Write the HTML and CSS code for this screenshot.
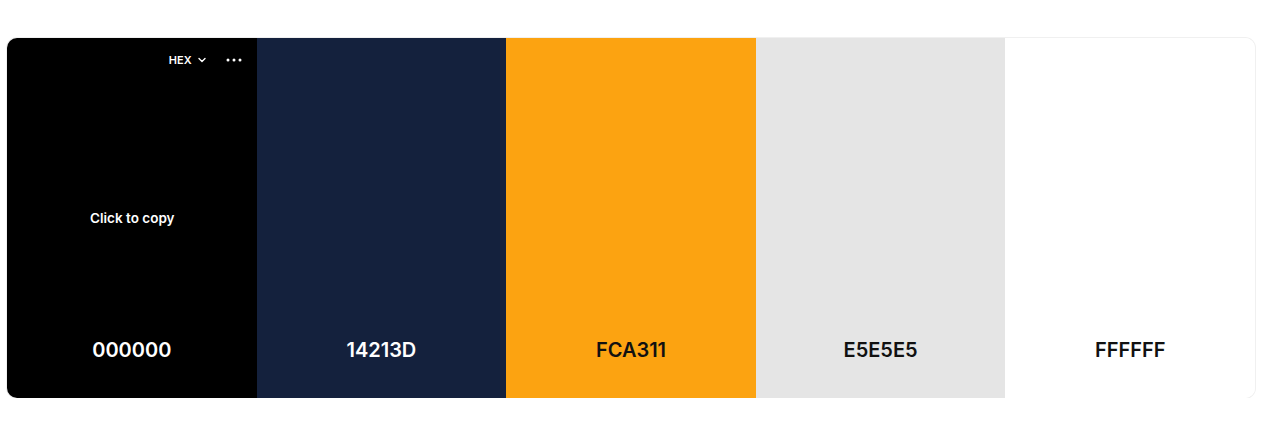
FILE: index.html
```html
<!DOCTYPE html>
<html lang="en">
<head>
  <meta charset="UTF-8" />
  <title>Palette</title>
  <link rel="stylesheet" href="styles.css">
</head>
<body>
  <div class="palette">
    <div class="swatch dark active" style="background:#000000">
      <div class="tools">
        <span class="format">HEX
          <svg width="8" height="6" viewBox="0 0 8 6"><path d="M1 1.5 4 4.5 7 1.5" fill="none" stroke="currentColor" stroke-width="1.4" stroke-linecap="round" stroke-linejoin="round"/></svg>
        </span>
        <svg class="more" width="16" height="4" viewBox="0 0 16 4"><circle cx="2" cy="2" r="1.5" fill="currentColor"/><circle cx="8" cy="2" r="1.5" fill="currentColor"/><circle cx="14" cy="2" r="1.5" fill="currentColor"/></svg>
      </div>
      <div class="hint">Click to copy</div>
      <div class="code">000000</div>
    </div>
    <div class="swatch dark" style="background:#14213d">
      <div class="code">14213D</div>
    </div>
    <div class="swatch" style="background:#fca311">
      <div class="code">FCA311</div>
    </div>
    <div class="swatch" style="background:#e5e5e5">
      <div class="code">E5E5E5</div>
    </div>
    <div class="swatch" style="background:#ffffff">
      <div class="code">FFFFFF</div>
    </div>
  </div>
</body>
</html>
```

FILE: styles.css
```css
body {
  margin: 0;
  background: #ffffff;
  font-family: Inter, "Noto Sans", sans-serif;
}
.palette {
  display: flex;
  width: 1248px;
  height: 360px;
  margin: 38px 0 0 7px;
  border-radius: 10px;
  overflow: hidden;
  box-shadow: 0 0 0 1px #f0f0f0;
}
.swatch {
  flex: 1;
  position: relative;
  display: flex;
  flex-direction: column;
  align-items: center;
  justify-content: center;
  color: #111111;
}
.swatch.dark {
  color: #ffffff;
}
.tools {
  position: absolute;
  top: 15px;
  right: 15px;
  display: flex;
  align-items: center;
  gap: 20px;
  font-size: 11px;
  font-weight: 600;
}
.format {
  display: flex;
  align-items: center;
  gap: 6px;
}
.hint {
  font-size: 13.5px;
  font-weight: 600;
  padding-left: 1px;
}
.code {
  position: absolute;
  bottom: 36px;
  left: 0;
  right: 0;
  text-align: center;
  font-size: 20px;
  font-weight: 600;
}
```
